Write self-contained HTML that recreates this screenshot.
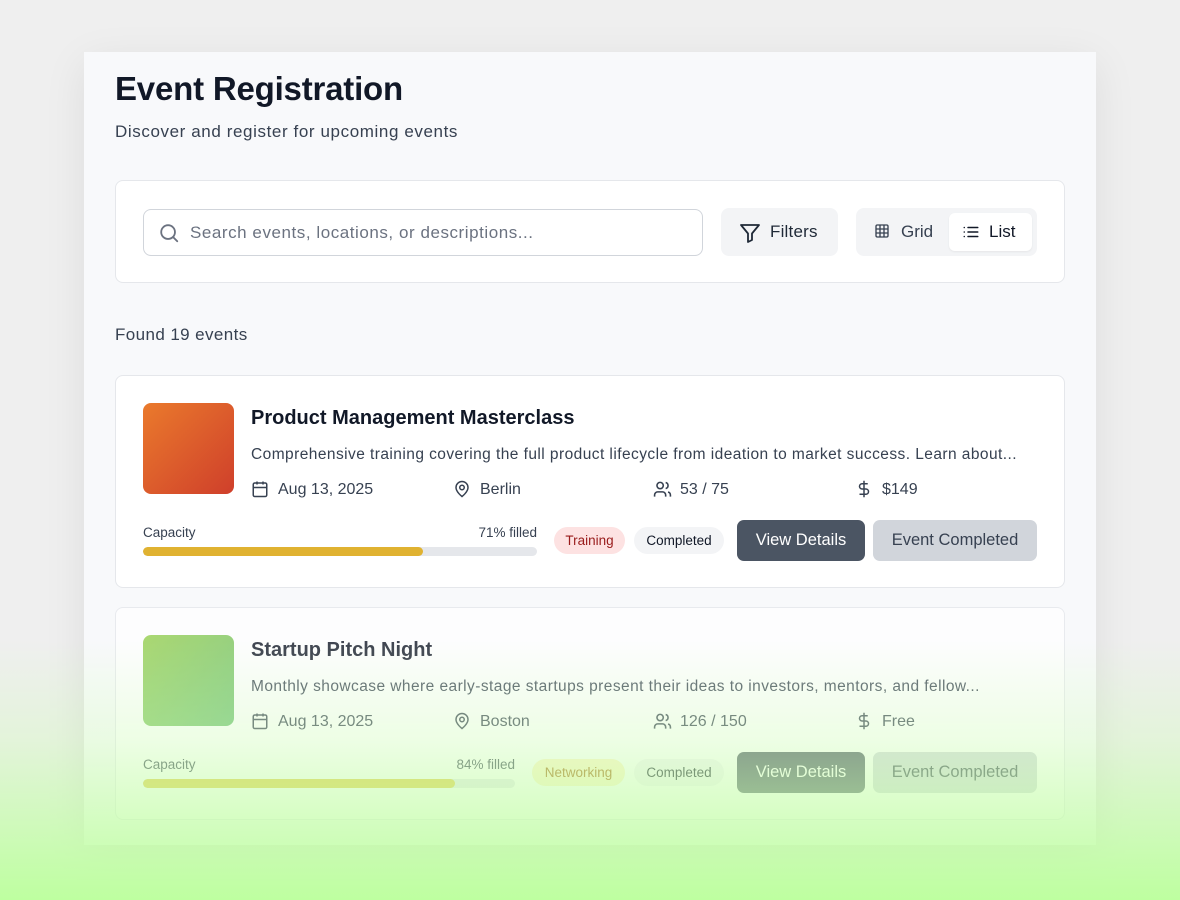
<!DOCTYPE html>
<html><head><meta charset="utf-8"><style>
*{box-sizing:border-box;margin:0;padding:0}
body{width:1180px;height:900px;background:#efefef;font-family:"Liberation Sans",sans-serif;color:#111827;position:relative;overflow:hidden}
.panel{position:absolute;left:84px;top:52px;width:1012px;height:793px;background:#f8f9fb;box-shadow:0 10px 40px rgba(0,0,0,.08)}
h1{position:absolute;left:31px;top:18px;font-size:33px;font-weight:700;letter-spacing:-.2px;color:#111827}
.sub{position:absolute;left:31px;top:70px;font-size:17px;color:#374151;letter-spacing:.6px}
.bar{position:absolute;left:31px;top:128px;width:950px;height:103px;background:#fff;border:1px solid #e5e7eb;border-radius:8px}
.search{position:absolute;left:27px;top:28px;width:560px;height:47px;border:1px solid #d1d5db;border-radius:8px;font-size:17px;color:#6b7280;padding:13px 0 0 46px;letter-spacing:.55px}
.search svg{position:absolute;left:14px;top:12px}
.fbtn{position:absolute;left:605px;top:27px;width:117px;height:48px;background:#f3f4f6;border-radius:8px;font-size:17px;color:#1f2937;padding:14px 0 0 49px;letter-spacing:.2px}
.fbtn svg{position:absolute;left:17px;top:13px}
.tog{position:absolute;left:740px;top:27px;width:181px;height:48px;background:#f3f4f6;border-radius:8px}
.tog .g{position:absolute;left:18px;top:14px;font-size:17px;color:#374151;padding-left:27px}
.tog .l{position:absolute;left:93px;top:5px;width:83px;height:38px;background:#fff;border-radius:6px;font-size:17px;color:#111827;padding:9px 0 0 40px;box-shadow:0 1px 2px rgba(0,0,0,.06)}
.g svg,.l svg{position:absolute;top:1px}
.found{position:absolute;left:31px;top:273px;font-size:17px;color:#374151;letter-spacing:.4px}
.card{position:absolute;left:31px;width:950px;height:213px;background:#fff;border:1px solid #e5e7eb;border-radius:8px}
.thumb{position:absolute;left:27px;top:27px;width:91px;height:91px;border-radius:8px}
.title{position:absolute;left:135px;top:31px;font-size:20px;font-weight:700;color:#111827}
.desc{position:absolute;left:135px;top:70px;font-size:15.5px;color:#374151;letter-spacing:.44px}
.meta{position:absolute;top:105px;font-size:16px;color:#374151;padding-left:27px}
.meta svg{position:absolute;left:0;top:-1px}
.caplab{position:absolute;left:27px;top:149px;font-size:13.5px;color:#374151}
.pct{position:absolute;top:149px;font-size:13.5px;color:#374151;text-align:right}
.track{position:absolute;left:27px;top:171px;height:9px;background:#e5e7eb;border-radius:5px;overflow:hidden}
.track div{height:100%;border-radius:5px}
.tag{position:absolute;top:151px;height:27px;border-radius:14px;font-size:13.5px;padding-top:6px;text-align:center}
.vd{position:absolute;left:621px;top:144px;width:128px;height:41px;background:#4b5563;border-radius:7px;color:#fff;font-size:16.5px;text-align:center;padding-top:11px;font-weight:500}
.ec{position:absolute;left:757px;top:144px;width:164px;height:41px;background:#d1d5db;border-radius:7px;color:#374151;font-size:16.5px;text-align:center;padding-top:11px}
.overlay{position:absolute;left:0;top:0;width:1180px;height:900px;pointer-events:none;background:linear-gradient(to bottom,rgba(190,255,160,0) 640px,rgba(200,255,170,.3) 740px,rgba(190,255,160,1) 900px)}
</style></head><body>
<div class="panel">
<h1>Event Registration</h1>
<div class="sub">Discover and register for upcoming events</div>
<div class="bar">
 <div class="search"><svg width="22" height="22" viewBox="0 0 24 24" fill="none" stroke="#6b7280" stroke-width="2" stroke-linecap="round"><circle cx="11" cy="11" r="7.5"/><path d="M21 21l-4.5-4.5"/></svg>Search events, locations, or descriptions...</div>
 <div class="fbtn"><svg width="24" height="24" viewBox="0 0 24 24" fill="none" stroke="#1f2937" stroke-width="1.8" stroke-linejoin="round"><path d="M3 4h18l-7 8.5V19l-4 2v-8.5z"/></svg>Filters</div>
 <div class="tog">
  <div class="g"><svg style="left:0" width="16" height="16" viewBox="0 0 24 24" fill="none" stroke="#374151" stroke-width="2"><rect x="3" y="3" width="18" height="18" rx="2"/><path d="M3 9h18M3 15h18M9 3v18M15 3v18"/></svg>Grid</div>
  <div class="l"><svg style="left:13px;top:10px" width="18" height="18" viewBox="0 0 24 24" fill="none" stroke="#111827" stroke-width="2" stroke-linecap="round"><path d="M8 6h13M8 12h13M8 18h13M3 6h.01M3 12h.01M3 18h.01"/></svg>List</div>
 </div>
</div>
<div class="found">Found 19 events</div>

<div class="card" style="top:323px">
 <div class="thumb" style="background:linear-gradient(135deg,#ea7a2c,#cf3f2b)"></div>
 <div class="title">Product Management Masterclass</div>
 <div class="desc">Comprehensive training covering the full product lifecycle from ideation to market success. Learn about...</div>
 <div class="meta" style="left:135px"><svg width="18" height="18" viewBox="0 0 24 24" fill="none" stroke="#374151" stroke-width="2"><rect x="3" y="4" width="18" height="18" rx="2"/><path d="M16 2v4M8 2v4M3 10h18"/></svg>Aug 13, 2025</div>
 <div class="meta" style="left:337px"><svg width="18" height="18" viewBox="0 0 24 24" fill="none" stroke="#374151" stroke-width="2"><path d="M20 10c0 6-8 12-8 12s-8-6-8-12a8 8 0 0 1 16 0z"/><circle cx="12" cy="10" r="3"/></svg>Berlin</div>
 <div class="meta" style="left:537px"><svg width="19" height="19" viewBox="0 0 24 24" fill="none" stroke="#374151" stroke-width="2"><path d="M16 21v-2a4 4 0 0 0-4-4H6a4 4 0 0 0-4 4v2"/><circle cx="9" cy="7" r="4"/><path d="M22 21v-2a4 4 0 0 0-3-3.87M16 3.13a4 4 0 0 1 0 7.75"/></svg>53 / 75</div>
 <div class="meta" style="left:739px"><svg width="18" height="18" viewBox="0 0 24 24" fill="none" stroke="#374151" stroke-width="2"><path d="M12 1v22M17 5H9.5a3.5 3.5 0 0 0 0 7h5a3.5 3.5 0 0 1 0 7H6"/></svg>$149</div>
 <div class="caplab">Capacity</div>
 <div class="pct" style="left:320px;width:101px">71% filled</div>
 <div class="track" style="width:394px"><div style="width:71%;background:#e0b231"></div></div>
 <div class="tag" style="left:438px;width:71px;background:#fde2e2;color:#991b1b">Training</div>
 <div class="tag" style="left:518px;width:90px;background:#f3f4f6;color:#111827">Completed</div>
 <div class="vd">View Details</div>
 <div class="ec">Event Completed</div>
</div>

<div class="card" style="top:555px;opacity:.8">
 <div class="thumb" style="background:linear-gradient(135deg,#98d050,#6cc070)"></div>
 <div class="title">Startup Pitch Night</div>
 <div class="desc">Monthly showcase where early-stage startups present their ideas to investors, mentors, and fellow...</div>
 <div class="meta" style="left:135px"><svg width="18" height="18" viewBox="0 0 24 24" fill="none" stroke="#374151" stroke-width="2"><rect x="3" y="4" width="18" height="18" rx="2"/><path d="M16 2v4M8 2v4M3 10h18"/></svg>Aug 13, 2025</div>
 <div class="meta" style="left:337px"><svg width="18" height="18" viewBox="0 0 24 24" fill="none" stroke="#374151" stroke-width="2"><path d="M20 10c0 6-8 12-8 12s-8-6-8-12a8 8 0 0 1 16 0z"/><circle cx="12" cy="10" r="3"/></svg>Boston</div>
 <div class="meta" style="left:537px"><svg width="19" height="19" viewBox="0 0 24 24" fill="none" stroke="#374151" stroke-width="2"><path d="M16 21v-2a4 4 0 0 0-4-4H6a4 4 0 0 0-4 4v2"/><circle cx="9" cy="7" r="4"/><path d="M22 21v-2a4 4 0 0 0-3-3.87M16 3.13a4 4 0 0 1 0 7.75"/></svg>126 / 150</div>
 <div class="meta" style="left:739px"><svg width="18" height="18" viewBox="0 0 24 24" fill="none" stroke="#374151" stroke-width="2"><path d="M12 1v22M17 5H9.5a3.5 3.5 0 0 0 0 7h5a3.5 3.5 0 0 1 0 7H6"/></svg>Free</div>
 <div class="caplab">Capacity</div>
 <div class="pct" style="left:298px;width:101px">84% filled</div>
 <div class="track" style="width:372px"><div style="width:84%;background:#e0c83a"></div></div>
 <div class="tag" style="left:416px;width:93px;background:#fdf4c4;color:#a16207">Networking</div>
 <div class="tag" style="left:518px;width:90px;background:#f3f4f6;color:#111827">Completed</div>
 <div class="vd">View Details</div>
 <div class="ec">Event Completed</div>
</div>
</div>
<div class="overlay"></div>
</body></html>
